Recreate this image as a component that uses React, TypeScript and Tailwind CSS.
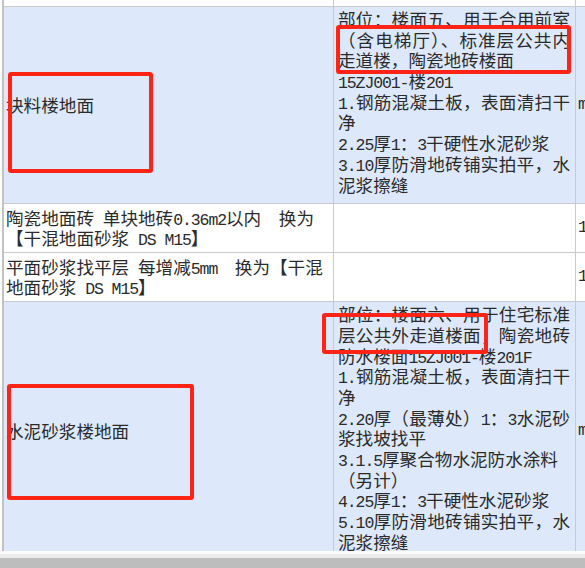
import React from "react";

// splits CJK text from ascii runs so digits/latin get the narrow half-width look
function Txt({ s }: { s: string }) {
  const parts = s.split(/([\x00-\x7F]+)/).filter((p) => p !== "");
  return (
    <>
      {parts.map((p, i) =>
        /^[\x00-\x7F]+$/.test(p) ? (
          <span
            key={i}
            className="font-['Liberation_Mono',monospace] text-[16.5px] tracking-[-1.1px] leading-none whitespace-pre"
          >
            {p}
          </span>
        ) : (
          <span key={i}>{p}</span>
        )
      )}
    </>
  );
}

type Line = { t: string; j?: boolean };

function Lines({ lines }: { lines: Line[] }) {
  return (
    <>
      {lines.map((l, i) => (
        <div
          key={i}
          className={
            l.j
              ? "h-[20.7px] text-justify [text-align-last:justify] whitespace-nowrap"
              : "h-[20.7px] whitespace-nowrap"
          }
        >
          <Txt s={l.t} />
        </div>
      ))}
    </>
  );
}

const row1: Line[] = [
  { t: "部位：楼面五、用于合用前室", j: true },
  { t: "（含电梯厅）、标准层公共内", j: true },
  { t: "走道楼，陶瓷地砖楼面" },
  { t: "15ZJ001-楼201" },
  { t: "1.钢筋混凝土板，表面清扫干", j: true },
  { t: "净" },
  { t: "2.25厚1：3干硬性水泥砂浆" },
  { t: "3.10厚防滑地砖铺实拍平，水", j: true },
  { t: "泥浆擦缝" },
];

const row4: Line[] = [
  { t: "部位：楼面六、用于住宅标准", j: true },
  { t: "层公共外走道楼面，陶瓷地砖", j: true },
  { t: "防水楼面15ZJ001-楼201F" },
  { t: "1.钢筋混凝土板，表面清扫干", j: true },
  { t: "净" },
  { t: "2.20厚（最薄处）1：3水泥砂", j: true },
  { t: "浆找坡找平" },
  { t: "3.1.5厚聚合物水泥防水涂料" },
  { t: "（另计）" },
  { t: "4.25厚1：3干硬性水泥砂浆" },
  { t: "5.10厚防滑地砖铺实拍平，水", j: true },
  { t: "泥浆擦缝" },
];

function Row({
  bg,
  name,
  desc,
  qty,
  h,
}: {
  bg: string;
  name: React.ReactNode;
  desc?: Line[];
  qty: string;
  h?: string;
}) {
  return (
    <div className={`flex border-b border-[#cacaca] ${bg} ${h ?? ""}`}>
      <div className="w-[330px] shrink-0 border-r border-[#cacaca] pl-[2px] flex items-center overflow-hidden">
        <div>{name}</div>
      </div>
      <div className="w-[242px] shrink-0 border-r border-[#cacaca] pl-[4px] pr-[5px] pt-[2px] pb-[8px]">
        {desc && <Lines lines={desc} />}
      </div>
      <div className="flex-1 pl-[2px] flex items-center overflow-hidden">
        <Txt s={qty} />
      </div>
    </div>
  );
}

function RedBox({ cls }: { cls: string }) {
  return <div className={`absolute border-4 border-[#ff2416] rounded-[3px] ${cls}`} />;
}

export default function App() {
  return (
    <div className="relative w-[585px] h-[568px] overflow-hidden bg-white text-[#2b2b2b] text-[17.6px] leading-[20.7px] font-['Noto_Sans_CJK_SC',sans-serif]">
      <div className="h-[551px] overflow-hidden">
        <div className="ml-[2px] border-l-2 border-[#c2c2c2]">
          <div className="flex h-[7px] border-b border-[#cacaca] bg-white">
            <div className="w-[330px] shrink-0 border-r border-[#cacaca]" />
            <div className="w-[242px] shrink-0 border-r border-[#cacaca]" />
            <div className="flex-1" />
          </div>
          <Row bg="bg-[#dde9fb]" name={<Txt s="块料楼地面" />} desc={row1} qty="m2" />
          <Row
            bg="bg-white"
            h="h-[49px]"
            name={
              <>
                <div className="h-[20.7px] whitespace-nowrap">
                  <Txt s="陶瓷地面砖 单块地砖0.36m2以内  换为" />
                </div>
                <div className="h-[20.7px] whitespace-nowrap">
                  <Txt s="【干混地面砂浆 DS M15】" />
                </div>
              </>
            }
            qty="1"
          />
          <Row
            bg="bg-white"
            h="h-[49px]"
            name={
              <>
                <div className="h-[20.7px] whitespace-nowrap">
                  <Txt s="平面砂浆找平层 每增减5mm  换为【干混" />
                </div>
                <div className="h-[20.7px] whitespace-nowrap">
                  <Txt s="地面砂浆 DS M15】" />
                </div>
              </>
            }
            qty="1"
          />
          <Row bg="bg-[#dde9fb]" name={<Txt s="水泥砂浆楼地面" />} desc={row4} qty="m2" />
        </div>
      </div>
      <div className="h-[3px] bg-[#fbfbfb]" />
      <div className="h-[4px] bg-[#ececec]" />
      <div className="h-[10px] bg-[#bdbdbd]" />

      <RedBox cls="left-[8px] top-[72px] w-[145px] h-[101px]" />
      <RedBox cls="left-[336px] top-[25px] w-[235px] h-[49px]" />
      <RedBox cls="left-[7px] top-[384px] w-[187px] h-[116px]" />
      <RedBox cls="left-[322px] top-[313px] w-[166px] h-[41px]" />
    </div>
  );
}
